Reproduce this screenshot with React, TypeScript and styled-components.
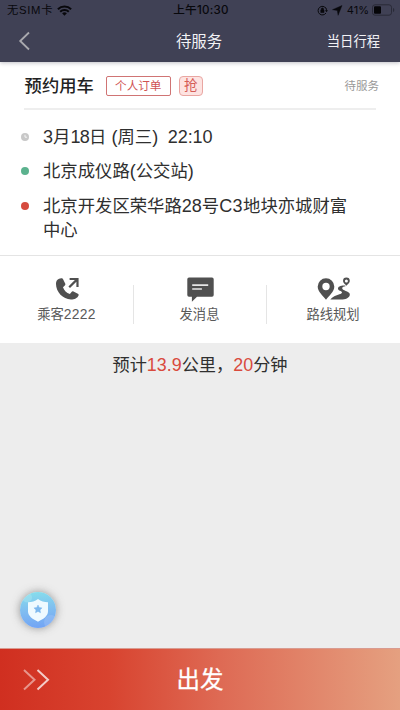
import React from 'react';
import styled, { createGlobalStyle } from 'styled-components';

const GlobalStyle = createGlobalStyle`
  * { box-sizing: border-box; }
  body {
    margin: 0;
    background: #ededed;
    font-family: "Liberation Sans", "Noto Sans CJK SC", sans-serif;
  }
`;

const Screen = styled.div`
  width: 400px;
  height: 710px;
  display: flex;
  flex-direction: column;
  overflow: hidden;
  background: #ededed;
  color: #2f2f2f;
`;

const Header = styled.header`
  height: 62px;
  flex: none;
  background: #404155;
  box-shadow: 0 1px 4px rgba(50, 50, 70, 0.3);
  z-index: 1;
`;

const StatusBar = styled.div`
  height: 20px;
  display: grid;
  grid-template-columns: 1fr auto 1fr;
  align-items: center;
  padding: 0 5px 0 7px;
  color: #08080c;
  font-size: 11px;
  line-height: 20px;
  svg { display: block; }
`;

const StatusGroup = styled.div<{ $end?: boolean }>`
  display: flex;
  align-items: center;
  justify-content: ${(p) => (p.$end ? 'flex-end' : 'flex-start')};
  white-space: nowrap;
`;

const Carrier = styled.span`
  font-size: 11.3px;
  letter-spacing: 0.7px;
  margin-right: 4px;
`;

const Clock = styled.span`
  font-family: Inter, "Noto Sans CJK SC", sans-serif;
  font-weight: 500;
  font-size: 11.6px;
  letter-spacing: 0.25px;
`;

const Battery = styled.span`
  font-family: Inter, sans-serif;
  font-size: 11px;
  margin: 0 3px 0 4px;
`;

const NavBar = styled.nav`
  height: 42px;
  display: grid;
  grid-template-columns: 1fr auto 1fr;
  align-items: center;
  padding: 0 20px 0 18px;
  color: #f2f2f5;
  line-height: 42px;
  svg { display: block; }
`;

const NavTitle = styled.h1`
  margin: 2px 0 0;
  font-size: 15.4px;
  line-height: 40px;
  font-weight: 400;
`;

const NavAction = styled.span`
  justify-self: end;
  margin-top: 2px;
  font-size: 13.3px;
  line-height: 40px;
`;

const Trip = styled.section`
  height: 194px;
  flex: none;
  background: #fff;
  border-bottom: 1px solid #e4e4e4;
`;

const TripHead = styled.div`
  display: flex;
  align-items: center;
  height: 48px;
  margin: 0 24px;
  border-bottom: 2px solid #eee;
`;

const TripType = styled.h2`
  margin: 2px 12px 0 0.6px;
  font-size: 17.3px;
  line-height: 24px;
  font-weight: 500;
  color: #222;
`;

const OrderTag = styled.span`
  width: 65px;
  height: 20px;
  margin-top: 1px;
  border: 1px solid #d07474;
  border-radius: 2px;
  color: #cf5353;
  font-size: 11.6px;
  line-height: 18px;
  text-align: center;
`;

const GrabTag = styled.span`
  width: 24px;
  height: 20px;
  margin: 1px 0 0 8px;
  border: 1px solid #e9a6a2;
  border-radius: 4px;
  background: #fde3e1;
  color: #d55c56;
  font-size: 13.5px;
  line-height: 18px;
  text-align: center;
`;

const TripState = styled.span`
  margin: 0 -3px 0 auto;
  font-size: 11.5px;
  color: #999;
`;

const Details = styled.div`
  display: flex;
  flex-direction: column;
  gap: 10.4px;
  padding: 15px 24px 0 21px;
`;

const Detail = styled.div`
  display: flex;
  font-size: 17.35px;
  line-height: 24px;
`;

const Marker = styled.span<{ $color: string }>`
  flex: none;
  width: 8px;
  height: 8px;
  margin: 8px 14px 0 0;
  border-radius: 50%;
  background: ${(p) => p.$color};
  svg { display: block; }
`;

const DetailText = styled.span<{ $width?: number }>`
  width: ${(p) => (p.$width ? `${p.$width}px` : 'auto')};
  white-space: pre-wrap;
`;

const Latin = styled.span<{ $spacing?: number }>`
  font-size: 1.04em;
  line-height: 1;
  letter-spacing: ${(p) => p.$spacing ?? 0}px;
`;

const Actions = styled.section`
  height: 87px;
  flex: none;
  display: grid;
  grid-template-columns: 133px 133px 134px;
  align-items: start;
  padding-top: 21px;
  background: #fff;
`;

const Action = styled.button`
  position: relative;
  height: 48px;
  margin: 0;
  padding: 0;
  border: 0;
  background: none;
  display: flex;
  flex-direction: column;
  align-items: center;
  justify-content: space-between;
  font: inherit;
  font-size: 13.3px;
  line-height: 20px;
  color: #595959;
  svg { display: block; flex: none; margin-left: 2px; }
  & + &::before {
    content: "";
    position: absolute;
    left: 0;
    top: 8px;
    width: 1px;
    height: 39px;
    background: #e5e5e5;
  }
`;

const Estimate = styled.p`
  margin: 10px 0 0;
  text-align: center;
  font-size: 17.2px;
  line-height: 24px;
`;

const Figure = styled(Latin)`
  color: #d94a3d;
`;

const Safety = styled.button`
  width: 36px;
  height: 36px;
  margin: auto 0 20px 20px;
  padding: 0;
  border: 0;
  border-radius: 50%;
  overflow: hidden;
  display: grid;
  place-items: center;
  background: linear-gradient(175deg, #86dcec 5%, #80bdf0 50%, #71a2f5 100%);
  box-shadow: 0 0 8px rgba(70, 70, 70, 0.55);
`;

const Depart = styled.button`
  height: 62px;
  flex: none;
  display: grid;
  grid-template-columns: 1fr auto 1fr;
  align-items: center;
  padding: 0 22px;
  border: 0;
  border-top: 1px solid #d99b90;
  background: linear-gradient(90deg, #d02f20 0%, #d8432f 27%, #de6a54 55%, #e5a080 100%);
  color: #fff;
  font: inherit;
  font-size: 23.5px;
  line-height: 60px;
  -webkit-text-stroke: 0.25px #fff;
  svg { display: block; }
`;

const Wifi = () => (
  <svg width="15" height="11" viewBox="0 0 15 11" fill="none" stroke="#08080c" strokeWidth="2">
    <path d="M.9 4.2a9.4 9.4 0 0 1 13.2 0M3.2 6.7a6.1 6.1 0 0 1 8.6 0" />
    <path d="M5.1 8.3a3.5 3.5 0 0 1 4.8 0L7.5 10.8z" fill="#08080c" stroke="none" />
  </svg>
);

const StatusIcons = () => (
  <svg width="26" height="11" viewBox="0 0 26 11">
    <path d="M9 3.3A4.3 4.3 0 1 0 9 8M8.6 2.7a4.3 4.3 0 0 1 .9 3" fill="none" stroke="#08080c" strokeWidth="1" />
    <path d="M8 5.2h3L9.5 7.2z" fill="#08080c" />
    <path d="M3.8 5.1h3.2v2.4H3.8zM4.3 5V4a1.1 1.1 0 0 1 2.2 0v1" fill="#08080c" stroke="#08080c" strokeWidth=".6" />
    <path d="M25 .5l-3.9 9.8-.8-4.9-4.8-.7z" fill="#08080c" stroke="#08080c" strokeWidth=".4" />
  </svg>
);

const BatteryIcon = () => (
  <svg width="23" height="12" viewBox="0 0 23 12">
    <rect x=".5" y=".8" width="19" height="10.4" rx="2.5" fill="none" stroke="#292a37" />
    <rect x="2" y="2.3" width="7" height="7.4" rx="1" fill="#050508" />
    <path d="M21 4v4c1.7-.5 1.7-3.5 0-4z" fill="#292a37" />
  </svg>
);

const Back = () => (
  <svg width="14" height="20" viewBox="0 0 14 20" fill="none" stroke="#a9a9ae" strokeWidth="1.8">
    <path d="M11 1.5 2.2 10 11 18.5" />
  </svg>
);

const ClockHands = () => (
  <svg width="8" height="8" viewBox="0 0 8 8" fill="none" stroke="#fff" strokeWidth=".8">
    <path d="M4 1.8v2.4h2.1" />
  </svg>
);

const PhoneIcon = () => (
  <svg width="25" height="24" viewBox="0 0 26 25">
    <path
      d="M4.2 1.8C2.3 2.4 1 4.3 1 7.1c0 8.6 7.2 16.2 15.6 16.3 3.7 0 7-1.7 7.9-4.2.3-.8 0-1.4-.7-1.8l-4.6-2.3c-.8-.4-1.4-.2-2 .5l-1.7 2.1c-3.6-1.2-6-3.7-7.2-7.1l1.9-1.8c.6-.6.7-1.1.5-1.8L8.4 2.4c-.4-1.4-2.6-1.3-4.2-.6z"
      fill="#505050"
    />
    <path d="M14.8 10.7 23 2.5M15.2 2.1h8.2v8.2" fill="none" stroke="#505050" strokeWidth="2.3" />
  </svg>
);

const MessageIcon = () => (
  <svg width="27" height="25" viewBox="0 0 27 25">
    <path d="M2 .5h23a1.7 1.7 0 0 1 1.7 1.7V18a1.7 1.7 0 0 1-1.7 1.7H10L4.9 24.7v-5H2A1.7 1.7 0 0 1 .3 18V2.2A1.7 1.7 0 0 1 2 .5z" fill="#505050" />
    <path d="M5.2 8.1h16M5.2 12h9.7" stroke="#e6e6e6" strokeWidth="1.6" />
  </svg>
);

const RouteIcon = () => (
  <svg width="34" height="24" viewBox="0 0 34 24" fill="#505050">
    <path fillRule="evenodd" d="M9 1.2a8.3 8.3 0 0 0-8.3 8.3C.7 14.8 6 18.7 9 22.7c3-4 8.3-7.9 8.3-13.2A8.3 8.3 0 0 0 9 1.2zm0 4.6a3.7 3.7 0 1 1 0 7.4 3.7 3.7 0 0 1 0-7.4z" />
    <path fillRule="evenodd" d="M29.4.5a3.4 3.4 0 0 0-3.4 3.4c0 2 2 3 3.4 4.8 1.4-1.8 3.4-2.8 3.4-4.8A3.4 3.4 0 0 0 29.4.5zm0 1.9a1.5 1.5 0 1 1 0 3 1.5 1.5 0 0 1 0-3z" />
    <path d="M28.4 8.5c-4.6-.3-7.6 1-7.4 3.3.2 2 3.8 2.2 4 3.4.2 1.8-4.6 2.4-7.7 4.1-1.7.9-2.9 2-4 3.3h12.4c4.1-.5 7.4-2.4 7.1-5.6-.4-3-7.9-3.4-7.6-5.8.2-1.3 1.6-1.7 3.2-1.9z" />
  </svg>
);

const Shield = () => (
  <svg width="36" height="36" viewBox="0 0 36 36">
    <circle cx="7" cy="5.5" r="5" fill="#bff2f1" opacity=".3" />
    <circle cx="31" cy="30" r="7" fill="#acc9fa" opacity=".35" />
    <path d="M18 7c3 2.3 6.2 3.2 10 3.2v9.1c0 4.6-4.2 7.7-10 10.4-5.8-2.7-10-5.8-10-10.4v-9.1c3.8 0 7-.9 10-3.2z" fill="#effaff" />
    <path d="m18 13 1.2 2.5 2.8.4-2 2 .5 2.8-2.5-1.3-2.5 1.3.5-2.8-2-2 2.8-.4z" fill="#7eb9ee" stroke="#7eb9ee" strokeWidth=".5" />
  </svg>
);

const Chevrons = () => (
  <svg width="28" height="22" viewBox="0 0 28 22" fill="none" stroke="#fff" strokeWidth="2">
    <path d="m2 1 10.5 9.7L2 20.4" opacity=".48" />
    <path d="m15.5 1 10.5 9.7L15.5 20.4" opacity=".75" />
  </svg>
);

export default function App() {
  return (
    <>
      <GlobalStyle />
      <Screen>
        <Header>
          <StatusBar>
            <StatusGroup>
              <Carrier>无SIM卡</Carrier>
              <Wifi />
            </StatusGroup>
            <Clock>上午10:30</Clock>
            <StatusGroup $end>
              <StatusIcons />
              <Battery>41%</Battery>
              <BatteryIcon />
            </StatusGroup>
          </StatusBar>
          <NavBar>
            <Back />
            <NavTitle>待服务</NavTitle>
            <NavAction>当日行程</NavAction>
          </NavBar>
        </Header>
        <Trip>
          <TripHead>
            <TripType>预约用车</TripType>
            <OrderTag>个人订单</OrderTag>
            <GrabTag>抢</GrabTag>
            <TripState>待服务</TripState>
          </TripHead>
          <Details>
            <Detail>
              <Marker $color="#c8c8c8"><ClockHands /></Marker>
              <DetailText><Latin>3</Latin>月<Latin $spacing={-0.7}>18</Latin>日<Latin> (</Latin>周三<Latin $spacing={-0.1}>)  22:10</Latin></DetailText>
            </Detail>
            <Detail>
              <Marker $color="#5bb28e" />
              <DetailText>北京成仪路<Latin>(</Latin>公交站<Latin>)</Latin></DetailText>
            </Detail>
            <Detail>
              <Marker $color="#d64b3e" />
              <DetailText $width={312}>北京开发区荣华路<Latin>28</Latin>号<Latin $spacing={0.4}>C3</Latin>地块亦城财富中心</DetailText>
            </Detail>
          </Details>
        </Trip>
        <Actions>
          <Action><PhoneIcon /><span>乘客<Latin $spacing={0.3}>2222</Latin></span></Action>
          <Action><MessageIcon /><span>发消息</span></Action>
          <Action><RouteIcon /><span>路线规划</span></Action>
        </Actions>
        <Estimate>预计<Figure>13.9</Figure>公里，<Figure>20</Figure>分钟</Estimate>
        <Safety aria-label="安全中心"><Shield /></Safety>
        <Depart><Chevrons /><span>出发</span></Depart>
      </Screen>
    </>
  );
}
